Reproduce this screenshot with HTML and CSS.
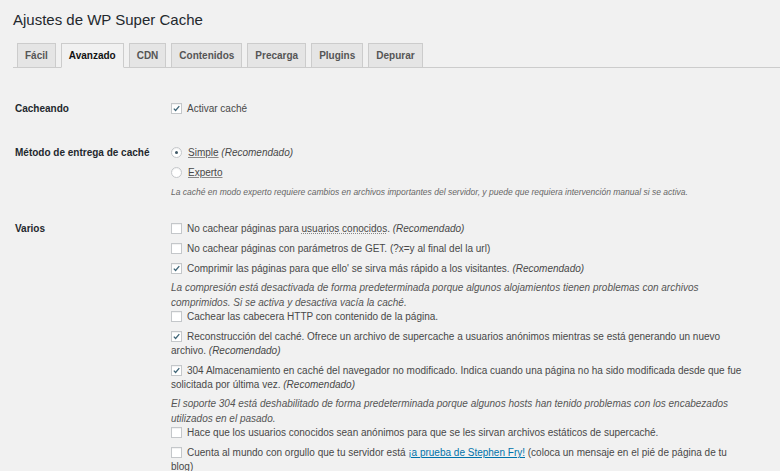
FILE: index.html
```html
<!DOCTYPE html>
<html lang="es">
<head>
  <meta charset="UTF-8">
  <title>Ajustes de WP Super Cache</title>
  <link rel="stylesheet" href="styles.css">
</head>
<body>
  <div class="wrap">
    <h1>Ajustes de WP Super Cache</h1>

    <nav class="tabs">
      <span class="tab">Fácil</span>
      <span class="tab active">Avanzado</span>
      <span class="tab">CDN</span>
      <span class="tab">Contenidos</span>
      <span class="tab">Precarga</span>
      <span class="tab">Plugins</span>
      <span class="tab">Depurar</span>
    </nav>

    <div class="settings">
      <div class="row">
        <div class="row-label">Cacheando</div>
        <div class="field">
          <label class="opt"><span class="cb on"><svg viewBox="0 0 11 11"><path d="M2.2 5.6 L4.4 7.9 L8.9 2.6"/></svg></span>Activar caché</label>
        </div>
      </div>

      <div class="row row-method">
        <div class="row-label">Método de entrega de caché</div>
        <div class="field">
          <label class="opt"><span class="rd on"></span><u>Simple</u> <em>(Recomendado)</em></label>
          <label class="opt"><span class="rd"></span><u>Experto</u></label>
          <p class="desc small">La caché en modo experto requiere cambios en archivos importantes del servidor, y puede que requiera intervención manual si se activa.</p>
        </div>
      </div>

      <div class="row">
        <div class="row-label">Varios</div>
        <div class="field narrow">
          <label class="opt"><span class="cb"></span>No cachear páginas para <u class="dot">usuarios conocidos</u>. <em>(Recomendado)</em></label>
          <label class="opt"><span class="cb"></span>No cachear páginas con parámetros de GET. (?x=y al final del la url)</label>
          <label class="opt"><span class="cb on"><svg viewBox="0 0 11 11"><path d="M2.2 5.6 L4.4 7.9 L8.9 2.6"/></svg></span>Comprimir las páginas para que ello' se sirva más rápido a los visitantes. <em>(Recomendado)</em></label>
          <p class="desc">La compresión está desactivada de forma predeterminada porque algunos alojamientos tienen problemas con archivos comprimidos. Si se activa y desactiva vacía la caché.</p>
          <label class="opt"><span class="cb"></span>Cachear las cabecera HTTP con contenido de la página.</label>
          <label class="opt"><span class="cb on"><svg viewBox="0 0 11 11"><path d="M2.2 5.6 L4.4 7.9 L8.9 2.6"/></svg></span>Reconstrucción del caché. Ofrece un archivo de supercache a usuarios anónimos mientras se está generando un nuevo archivo. <em>(Recomendado)</em></label>
          <label class="opt"><span class="cb on"><svg viewBox="0 0 11 11"><path d="M2.2 5.6 L4.4 7.9 L8.9 2.6"/></svg></span>304 Almacenamiento en caché del navegador no modificado. Indica cuando una página no ha sido modificada desde que fue solicitada por última vez. <em>(Recomendado)</em></label>
          <p class="desc">El soporte 304 está deshabilitado de forma predeterminada porque algunos hosts han tenido problemas con los encabezados utilizados en el pasado.</p>
          <label class="opt"><span class="cb"></span>Hace que los usuarios conocidos sean anónimos para que se les sirvan archivos estáticos de supercaché.</label>
          <label class="opt"><span class="cb"></span>Cuenta al mundo con orgullo que tu servidor está <a href="#">¡a prueba de Stephen Fry!</a> (coloca un mensaje en el pié de página de tu blog)</label>
        </div>
      </div>
    </div>
  </div>
</body>
</html>
```

FILE: styles.css
```css
body {
  margin: 0;
  background: #f1f1f1;
  font-family: "Liberation Sans", Arial, sans-serif;
  color: #484848;
  overflow: hidden;
}

.wrap {
  padding: 10px 0 0 13px;
}

h1 {
  margin: 0;
  font-size: 15px;
  font-weight: 400;
  line-height: 20px;
  color: #23282d;
}

.tabs {
  display: flex;
  margin-top: 13px;
  padding-left: 4px;
  border-bottom: 1px solid #ccc;
}

.tab {
  margin: 0 5px -1px 0;
  padding: 0 7px;
  line-height: 23px;
  border: 1px solid #ccc;
  background: #e5e5e5;
  font-size: 10px;
  font-weight: bold;
  color: #555;
}

.tab.active {
  background: #f1f1f1;
  border-bottom-color: #f1f1f1;
  color: #111;
}

.settings {
  margin-top: 19px;
}

.row {
  display: flex;
  padding: 15px 0;
}

.row-method {
  padding-bottom: 9px;
}

.row-label {
  flex: none;
  width: 158px;
  padding-left: 2px;
  box-sizing: border-box;
  font-size: 10px;
  font-weight: bold;
  line-height: 14px;
  color: #23282d;
}

.field {
  flex: 1;
  font-size: 10px;
  line-height: 14px;
}

.field.narrow {
  flex: none;
  width: 574px;
}

.opt {
  display: block;
  margin-bottom: 6px;
}

.opt:last-child {
  margin-bottom: 0;
}

.opt em, .desc {
  font-style: italic;
}

u {
  text-decoration-color: #888;
}

u.dot {
  text-decoration-style: dotted;
}

a {
  color: #0073aa;
}

.desc {
  margin: -2px 0 0;
  line-height: 15px;
  color: #555;
}

.desc.small {
  margin-top: 4px;
  font-size: 8.5px;
  line-height: 12px;
  color: #666;
}

.cb, .rd {
  display: inline-block;
  width: 11px;
  height: 11px;
  margin: 0 5px 0 0;
  vertical-align: -2px;
  box-sizing: border-box;
  border: 1px solid #c4c7ca;
  background: #fff;
  box-shadow: inset 0 1px 1px rgba(0, 0, 0, 0.06);
}

.cb svg {
  display: block;
  width: 100%;
  height: 100%;
  fill: none;
  stroke: #3f6577;
  stroke-width: 1.6;
}

.rd {
  border-radius: 50%;
  margin-right: 6px;
  position: relative;
}

.rd.on::after {
  content: "";
  position: absolute;
  left: 3px;
  top: 3px;
  width: 3px;
  height: 3px;
  border-radius: 50%;
  background: #3f5866;
}
```
